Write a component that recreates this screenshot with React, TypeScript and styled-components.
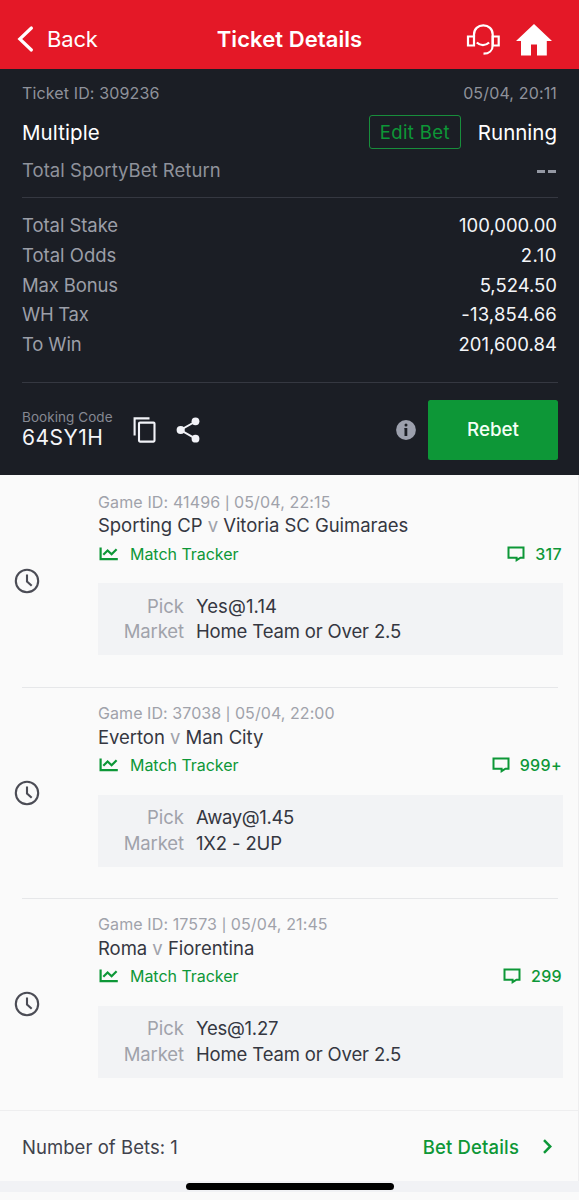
import React from "react";
import styled, { createGlobalStyle } from "styled-components";

const GREEN = "#0d9737";

const GlobalStyle = createGlobalStyle`
  * { box-sizing: border-box; }
  body {
    margin: 0;
    background: #fafafa;
    font-family: Inter, "Liberation Sans", sans-serif;
    font-kerning: normal;
  }
`;

const Text = styled.span<{ $size: number; $color: string; $spacing?: number; $weight?: number }>`
  font-size: ${(p) => p.$size}px;
  color: ${(p) => p.$color};
  letter-spacing: ${(p) => p.$spacing ?? 0}px;
  font-weight: ${(p) => p.$weight ?? 400};
  white-space: nowrap;
`;

const Screen = styled.div`
  width: 579px;
  height: 1200px;
  display: flex;
  flex-direction: column;
  overflow: hidden;
  background: #fafafa;
`;

const Header = styled.header`
  height: 69px;
  flex: none;
  display: grid;
  grid-template-columns: 1fr auto 1fr;
  align-items: center;
  padding: 9px 27px 0 17px;
  background: #e41827;
`;

const Title = styled.h1`
  margin: 0;
  padding-left: 10px;
  display: flex;
  font-size: 22px;
`;

const BackButton = styled.div`
  display: flex;
  align-items: center;
  gap: 13px;
`;

const HeaderIcons = styled.div`
  display: flex;
  justify-content: flex-end;
  align-items: center;
  gap: 16px;
  padding-top: 1px;
`;

const Summary = styled.section`
  height: 406px;
  flex: none;
  padding: 0 21px 0 22px;
  background: #1b1e25;
`;

const SplitRow = styled.div<{ $height: number }>`
  height: ${(p) => p.$height}px;
  display: flex;
  align-items: center;
  justify-content: space-between;
  padding-right: 1px;
`;

const TicketHead = styled.div`
  height: 129px;
  padding-top: 8px;
  border-bottom: 1px solid #353841;
`;

const Totals = styled.div`
  height: 185px;
  padding-top: 12.200px;
  border-bottom: 1px solid #353841;
`;

const StatusGroup = styled.div`
  display: flex;
  align-items: center;
  gap: 17px;
`;

const EditButton = styled.div`
  width: 92px;
  height: 34px;
  border: 1.500px solid #188e3c;
  border-radius: 3px;
  display: flex;
  align-items: center;
  justify-content: center;
`;

const Dashes = styled.div`
  display: flex;
  gap: 3px;
  padding-right: 1px;
  padding-top: 2px;
`;

const Dash = styled.i`
  width: 8px;
  height: 3px;
  background: #9498a3;
`;

const BookingBar = styled.div`
  height: 92px;
  display: flex;
  align-items: center;
  padding-top: 1.400px;
`;

const BookingCode = styled.div`
  width: 111px;
  display: flex;
  flex-direction: column;
`;

const BookingActions = styled.div`
  flex: 1;
  display: flex;
  align-items: center;
  gap: 20px;
`;

const RebetButton = styled.div`
  width: 130px;
  height: 60px;
  margin-left: 12px;
  border-radius: 2.500px;
  background: ${GREEN};
  display: flex;
  align-items: center;
  justify-content: center;
`;

const Matches = styled.main`
  height: 635px;
  flex: none;
  display: flex;
  flex-direction: column;
  border-right: 1px solid #eeeeef;
`;

const Match = styled.article`
  height: 212px;
  flex: none;
  display: flex;
  align-items: stretch;
  margin: 0 20px 0 22px;
  & + & { height: 211px; border-top: 1px solid #e6e7e9; }
`;

const StatusColumn = styled.div`
  width: 76px;
  flex: none;
  display: flex;
  align-items: flex-start;
  padding-top: 93px;
  ${Match} + ${Match} & { padding-top: 92px; }
  svg { margin-left: -8px; }
`;

const MatchBody = styled.div`
  flex: none;
  width: 465px;
  padding-top: 16px;
  ${Match} + ${Match} & { padding-top: 14.500px; }
`;

const Line = styled.div<{ $height: number }>`
  height: ${(p) => p.$height}px;
  display: flex;
  align-items: center;
`;

const TrackerRow = styled.div`
  height: 31px;
  display: flex;
  align-items: center;
  padding-right: 1px;
`;

const TrackerLink = styled.div`
  flex: 1;
  display: flex;
  align-items: center;
  gap: 12px;
`;

const Comments = styled.div`
  display: flex;
  align-items: center;
  gap: 10px;
`;

const PickBox = styled.dl`
  margin: 14px 0 0;
  height: 72px;
  padding: 11px 0 0;
  display: grid;
  grid-template-columns: 86px 1fr;
  grid-auto-rows: 25.500px;
  column-gap: 12px;
  align-items: center;
  background: #f2f3f5;
`;

const PickLabel = styled.dt`
  text-align: right;
  line-height: 25px;
`;

const PickValue = styled.dd`
  margin: 0;
  line-height: 25px;
`;

const Footer = styled.footer`
  height: 71px;
  flex: none;
  display: flex;
  align-items: center;
  justify-content: space-between;
  padding: 1px 26px 0 22px;
  border-top: 1px solid #eeeeef;
  border-right: 1px solid #eeeeef;
`;

const DetailsLink = styled.div`
  display: flex;
  align-items: center;
  gap: 24px;
`;

const BottomStrip = styled.div`
  height: 11px;
  flex: none;
  display: flex;
  justify-content: center;
  padding: 2px 0 0 1px;
  background: #f1f2f5;
`;

const HomeIndicator = styled.div`
  width: 208px;
  height: 7px;
  border-radius: 4px;
  background: #000;
`;

const BackIcon = () => (
  <svg width="17" height="28" viewBox="0 0 17 28" fill="none" stroke="#fff" strokeWidth="3.2" strokeLinecap="round">
    <path d="M14.400 3 2.800 14l11.600 11" />
  </svg>
);

const SupportIcon = () => (
  <svg width="34" height="32" viewBox="0 0 34 32" fill="none" stroke="#fff" strokeWidth="2.200">
    <path d="M8 12.500v-2C8 5 12 1.400 17.300 1.400S26.700 5 26.700 10.500v11c0 5-3.700 8.200-9.200 8.200" />
    <path d="M2 12.500h6v9H2zM26.700 12.500h6v9h-6z" />
    <path d="M10.800 18.500c3.500 3.400 8.800 3.400 12.300 0" />
  </svg>
);

const HomeIcon = () => (
  <svg width="36" height="32" viewBox="0 0 36 32" fill="#fff">
    <path d="M18 0 36 17h-5.200v14.600H21V20.400h-6v11.200H5V17H0z" />
  </svg>
);

const CopyIcon = () => (
  <svg width="23" height="26" viewBox="0 0 23 26" fill="none" stroke="#f2f3f8" strokeWidth="2.100">
    <path d="M1.600 18.500V1.400H16.500" />
    <rect x="6" y="5.600" width="15.500" height="19" rx="1" />
  </svg>
);

const ShareIcon = () => (
  <svg width="24" height="26" viewBox="0 0 24 26" fill="#f2f3f8">
    <path d="M19.500 4.500 4.500 13l15 8.700" fill="none" stroke="#f2f3f8" strokeWidth="2" />
    <circle cx="19.500" cy="4.300" r="3.900" />
    <circle cx="4.700" cy="13" r="4.100" />
    <circle cx="19.500" cy="21.700" r="3.900" />
  </svg>
);

const InfoIcon = () => (
  <svg width="20" height="20" viewBox="0 0 20 20">
    <circle cx="10" cy="10" r="9.900" fill="#9ca0ad" />
    <circle cx="10" cy="5" r="1.500" fill="#1b1e25" />
    <path d="M8.300 7.900h3v8.200H8.500V9.200h-.2z" fill="#1b1e25" />
  </svg>
);

const ClockIcon = () => (
  <svg width="26" height="26" viewBox="0 0 26 26" fill="none" stroke="#4b4c55" strokeWidth="2.100">
    <circle cx="13" cy="13" r="11.200" />
    <path d="M13 6.500v7l4.700 4.300" />
  </svg>
);

const TrackerIcon = () => (
  <svg width="20" height="14" viewBox="0 0 20 14" fill="none" stroke={GREEN} strokeWidth="2.200">
    <path d="M2.600 .5V12.200H19.800" />
    <path d="M5.300 7.800 9.600 3.500l4 3.800 5-5" />
  </svg>
);

const CommentIcon = () => (
  <svg width="18" height="16" viewBox="0 0 18 16" fill="none" stroke={GREEN} strokeWidth="2">
    <path d="M1.500 1.500h15v10.200H13.500L9.600 14.100v-2.400H1.500z" />
  </svg>
);

const ChevronIcon = () => (
  <svg width="9" height="15" viewBox="0 0 9 15" fill="none" stroke={GREEN} strokeWidth="2.500">
    <path d="M1 1.200 7.300 7.500 1 13.800" />
  </svg>
);

const totals = [
  { label: "Total Stake", tracking: -0.06, value: "100,000.00", valueTracking: 0 },
  { label: "Total Odds", tracking: 0, value: "2.10", valueTracking: 0.5 },
  { label: "Max Bonus", tracking: -0.15, value: "5,524.50", valueTracking: 0 },
  { label: "WH Tax", tracking: -0.3, value: "-13,854.66", valueTracking: 0.2 },
  { label: "To Win", tracking: -0.15, value: "201,600.84", valueTracking: 0.05 },
];

const matches = [
  { id: "41496", time: "22:15", home: "Sporting CP", away: "Vitoria SC Guimaraes", comments: "317", pick: "Yes@1.14", pickTracking: 0.1, market: "Home Team or Over 2.5", idTracking: 0.13 },
  { id: "37038", time: "22:00", home: "Everton", away: "Man City", comments: "999+", pick: "Away@1.45", pickTracking: -0.35, market: "1X2 - 2UP", idTracking: 0.07 },
  { id: "17573", time: "21:45", home: "Roma", away: "Fiorentina", comments: "299", pick: "Yes@1.27", pickTracking: -0.25, market: "Home Team or Over 2.5", idTracking: 0.11 },
];

export default function App() {
  return (
    <Screen>
      <GlobalStyle />
      <Header>
        <BackButton>
          <BackIcon />
          <Text $size={22} $color="#fff" $spacing={-0.15}>Back</Text>
        </BackButton>
        <Title>
          <Text $size={22} $color="#fff" $weight={600} $spacing={0.07}>Ticket Details</Text>
        </Title>
        <HeaderIcons>
          <SupportIcon />
          <HomeIcon />
        </HeaderIcons>
      </Header>

      <Summary>
        <TicketHead>
          <SplitRow $height={32}>
            <Text $size={16} $color="#8f929b" $spacing={0.13}>Ticket ID: 309236</Text>
            <Text $size={16} $color="#8f929b" $spacing={0.15}>05/04, 20:11</Text>
          </SplitRow>
          <SplitRow $height={46}>
            <Text $size={20.5} $color="#fff" $spacing={0.1}>Multiple</Text>
            <StatusGroup>
              <EditButton>
                <Text $size={18.5} $color={GREEN} $spacing={0.4}>Edit Bet</Text>
              </EditButton>
              <Text $size={20.5} $color="#fff">Running</Text>
            </StatusGroup>
          </SplitRow>
          <SplitRow $height={30}>
            <Text $size={18.5} $color="#8f929b" $spacing={0.03}>Total SportyBet Return</Text>
            <Dashes><Dash /><Dash /></Dashes>
          </SplitRow>
        </TicketHead>
        <Totals>
          {totals.map((t) => (
            <SplitRow key={t.label} $height={29.8}>
              <Text $size={18.5} $color="#9c9fa8" $spacing={t.tracking}>{t.label}</Text>
              <Text $size={18.5} $color="#f4f5f8" $spacing={t.valueTracking}>{t.value}</Text>
            </SplitRow>
          ))}
        </Totals>
        <BookingBar>
          <BookingCode>
            <Text $size={13.5} $color="#858892" $spacing={0.06}>Booking Code</Text>
            <Text $size={21} $color="#f4f5f8" $spacing={0.5}>64SY1H</Text>
          </BookingCode>
          <BookingActions>
            <CopyIcon />
            <ShareIcon />
          </BookingActions>
          <InfoIcon />
          <RebetButton>
            <Text $size={18.8} $color="#f4fff6" $weight={500}>Rebet</Text>
          </RebetButton>
        </BookingBar>
      </Summary>

      <Matches>
        {matches.map((m) => (
          <Match key={m.id}>
            <StatusColumn><ClockIcon /></StatusColumn>
            <MatchBody>
              <Line $height={21}>
                <Text $size={16} $color="#a0a2aa" $spacing={m.idTracking}>
                  Game ID: {m.id} <Text $size={13} $color="#a0a2aa" $weight={500}>|</Text> 05/04, {m.time}
                </Text>
              </Line>
              <Line $height={26}>
                <Text $size={18.5} $color="#353741" $spacing={-0.04}>
                  {m.home} <Text $size={18.5} $color="#a0a2aa">v</Text> {m.away}
                </Text>
              </Line>
              <TrackerRow>
                <TrackerLink>
                  <TrackerIcon />
                  <Text $size={16} $color={GREEN} $spacing={-0.04}>Match Tracker</Text>
                </TrackerLink>
                <Comments>
                  <CommentIcon />
                  <Text $size={16} $color={GREEN} $weight={500} $spacing={0.35}>{m.comments}</Text>
                </Comments>
              </TrackerRow>
              <PickBox>
                <PickLabel><Text $size={18.5} $color="#a0a2aa">Pick</Text></PickLabel>
                <PickValue><Text $size={18.5} $color="#353741" $spacing={m.pickTracking}>{m.pick}</Text></PickValue>
                <PickLabel><Text $size={18.5} $color="#a0a2aa" $spacing={-0.1}>Market</Text></PickLabel>
                <PickValue><Text $size={18.5} $color="#353741" $spacing={-0.15}>{m.market}</Text></PickValue>
              </PickBox>
            </MatchBody>
          </Match>
        ))}
      </Matches>

      <Footer>
        <Text $size={18.5} $color="#40424c" $spacing={0.05}>Number of Bets: 1</Text>
        <DetailsLink>
          <Text $size={18.5} $color={GREEN} $weight={500} $spacing={0.15}>Bet Details</Text>
          <ChevronIcon />
        </DetailsLink>
      </Footer>
      <BottomStrip>
        <HomeIndicator />
      </BottomStrip>
    </Screen>
  );
}
